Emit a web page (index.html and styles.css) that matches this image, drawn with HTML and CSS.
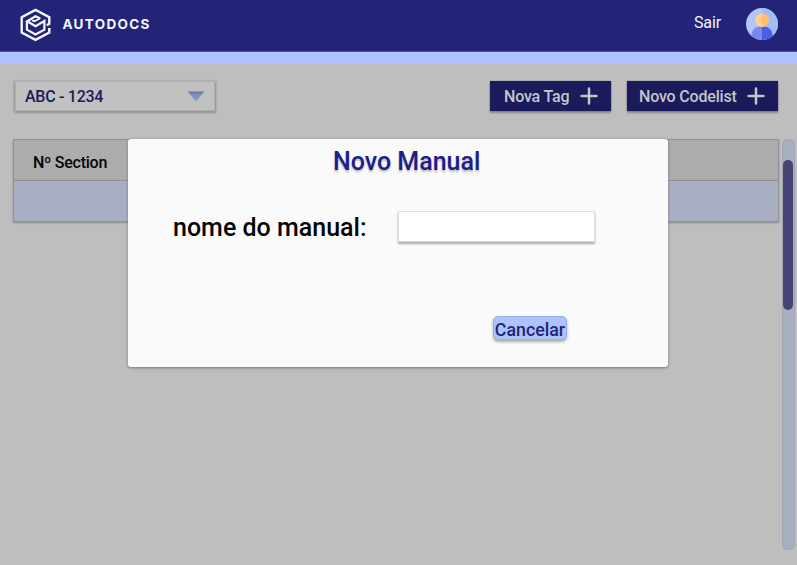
FILE: index.html
```html
<!DOCTYPE html>
<html lang="pt-BR">
<head>
<meta charset="utf-8">
<title>Autodocs</title>
<link rel="stylesheet" href="styles.css">
</head>
<body>
<header class="topbar">
  <a class="brand">
    <svg class="brand-mark" viewBox="0 0 32 34" fill="none" stroke="#f6f7ff" stroke-width="2.4">
      <path d="M26.800 17.200L29.300 15.700V9.200L15.500 1.900L1.700 9.200V24.600L15.500 31.900L29.300 24.600V20"/>
      <path d="M6.900 13V21.600L15.500 26.400L24.400 21.600V13L15.500 18.300L7.200 13.300L15.500 8.200L20.200 10.400" stroke-width="2.200"/>
      <path d="M20.200 10.200L14.500 13.200L12 12.300" stroke-width="1.800"/>
    </svg>
    <span class="brand-name">AUTODOCS</span>
  </a>
  <nav class="account">
    <a class="logout">Sair</a>
    <svg class="avatar" viewBox="0 0 32 32">
      <circle cx="16" cy="16" r="16" fill="#b1c5fa"/>
      <path d="M16 0a16 16 0 0 1 0 32z" fill="#a3bcf5"/>
      <path d="M5.500 28V27C6 21.500 10 18 16 18v14c-4 0-7.600-1.500-10.500-4z" fill="#7b87ea"/>
      <path d="M26.500 28V27C26 21.500 22 18 16 18v14c4 0 7.600-1.500 10.500-4z" fill="#4a5de8"/>
      <circle cx="16" cy="12.200" r="6.800" fill="#ffd18a"/>
      <path d="M16 5.400a6.800 6.800 0 0 1 0 13.600z" fill="#ffc06c"/>
    </svg>
  </nav>
</header>
<main class="page">
  <div class="toolbar">
    <div class="select">
      <span class="select-value">ABC - 1234</span>
      <svg class="caret" viewBox="0 0 18 11"><defs><linearGradient id="caret-fill" x2="0" y2="1"><stop stop-color="#66749e"/><stop offset=".4" stop-color="#8192c0"/><stop offset="1" stop-color="#8798c5"/></linearGradient></defs><path d="M.5.500h17L9 10.500z" fill="url(#caret-fill)"/></svg>
    </div>
    <button class="action tag"><span>Nova Tag</span><svg class="plus" viewBox="0 0 18 18"><path d="M9 1.500v15M1.500 9h15"/></svg></button>
    <button class="action codelist"><span>Novo Codelist</span><svg class="plus" viewBox="0 0 18 18"><path d="M9 1.500v15M1.500 9h15"/></svg></button>
  </div>
  <div class="content">
    <div class="table">
      <div class="table-head"><span>Nº Section</span></div>
      <div class="table-row"></div>
    </div>
    <div class="scroll-track"><div class="scroll-thumb"></div></div>
  </div>
</main>
<section class="modal" role="dialog">
  <h1 class="modal-title">Novo Manual</h1>
  <label class="field"><span>nome do manual:</span><input class="field-input" type="text"></label>
  <button class="cancel">Cancelar</button>
</section>
</body>
</html>
```

FILE: styles.css
```css
* { box-sizing: border-box; }
body {
  margin: 0;
  height: 565px;
  overflow: hidden;
  display: flex;
  flex-direction: column;
  background: #bebebe;
  font-family: Roboto, "Liberation Sans", sans-serif;
}
button { border: 0; padding: 0; font-family: inherit; }
.topbar {
  flex: none;
  height: 64px;
  padding: 0 19px 0 20px;
  display: flex;
  justify-content: space-between;
  align-items: flex-start;
  background: linear-gradient(#232378 51px, #5155a0 51px, #5155a0 52px, #aec3fc 52px);
}
.brand { display: flex; padding-top: 8px; }
.brand-mark { width: 32px; height: 34px; }
.brand-name {
  margin: 8px 0 0 10.500px;
  font: 700 13.500px/17px Inter, sans-serif;
  letter-spacing: 1.300px;
  color: #f6f7ff;
}
.account { display: flex; padding-top: 8px; }
.logout { margin-right: 25px; font-size: 16px; letter-spacing: -.1px; line-height: 29px; color: #f4f4fb; }
.avatar { width: 32px; height: 32px; }
.page { flex: 1; display: flex; flex-direction: column; padding: 17px 2px 0 13px; }
.toolbar { display: flex; height: 30px; padding: 0 17px 0 2px; }
.select {
  width: 200px;
  height: 30px;
  margin-right: auto;
  padding: 0 9px;
  display: flex;
  align-items: center;
  justify-content: space-between;
  background: #c1c1c1;
  border: 1px solid #b0b0b0;
  box-shadow: 0 1px 2px 1px #929292;
  color: #1b1a5b;
  font-size: 16px;
  letter-spacing: -.28px;
  font-weight: 500;
}
.caret { width: 18px; height: 11px; }
.action {
  height: 30px;
  display: flex;
  align-items: center;
  justify-content: space-between;
  background: #1b1a5b;
  color: #c5c5cc;
  font-size: 16px;
  letter-spacing: -.18px;
  font-weight: 500;
  box-shadow: 0 0 1px #55557a, 0 2px 2px #888;
}
.tag { width: 121px; padding: 0 13px 0 14px; }
.codelist { width: 151px; margin-left: 16px; padding: 0 13px 0 12px; }
.plus { width: 18px; height: 18px; fill: none; stroke: #c5c5c5; stroke-width: 2.500; stroke-linecap: round; }
.content { display: flex; justify-content: space-between; margin-top: 28px; }
.table { width: 766px; height: 83px; border: 1px solid #929294; box-shadow: 0 1px 2px #8c8c8c; }
.table-head {
  height: 41px;
  padding: 0 19px;
  display: flex;
  align-items: center;
  background: #acacac;
  border-bottom: 1px solid #8f8f91;
  font-size: 16px;
  letter-spacing: -.26px;
  font-weight: 500;
  color: #050505;
}
.table-head span { padding-top: 4px; }
.table-row { height: 40px; background: #a9afc3; }
.scroll-track {
  width: 13px;
  height: 411px;
  padding: 21px 1px 0;
  border-radius: 6px;
  background: #a9afc3;
  box-shadow: inset 0 0 0 1px #a0a5b6;
}
.scroll-thumb { width: 10px; height: 150px; border-radius: 5px; background: #454473; }
.modal {
  position: absolute;
  left: 128px;
  top: 139px;
  width: 540px;
  height: 228px;
  display: flex;
  flex-direction: column;
  border-radius: 3px;
  background: #fafafa;
  box-shadow: 0 1px 3px #777;
}
.modal-title {
  margin: 7px 0 0 205px;
  font-size: 25px;
  line-height: 32px;
  font-weight: 500;
  color: #1c1f8b;
  text-shadow: 0 2px 2px #bbb;
}
.field {
  display: flex;
  align-items: center;
  justify-content: space-between;
  margin: 33px 73px 0 45px;
  height: 32px;
  font-size: 25px;
  font-weight: 500;
  color: #050505;
}
.field-input {
  width: 197px;
  height: 31px;
  margin-bottom: 2px;
  border: 1px solid #dedede;
  outline: 0;
  background: #fff;
  box-shadow: 0 2px 2px #aaa;
}
.cancel {
  margin: 73px 0 0 365px;
  width: 74px;
  height: 24px;
  border: 1px solid #97abeb;
  border-radius: 5px;
  background: #aec3fc;
  box-shadow: 0 2px 3px #aaa;
  color: #232378;
  font-size: 17.800px;
  line-height: 25px;
  font-weight: 500;
  white-space: nowrap;
  display: flex;
  justify-content: center;
}
```
